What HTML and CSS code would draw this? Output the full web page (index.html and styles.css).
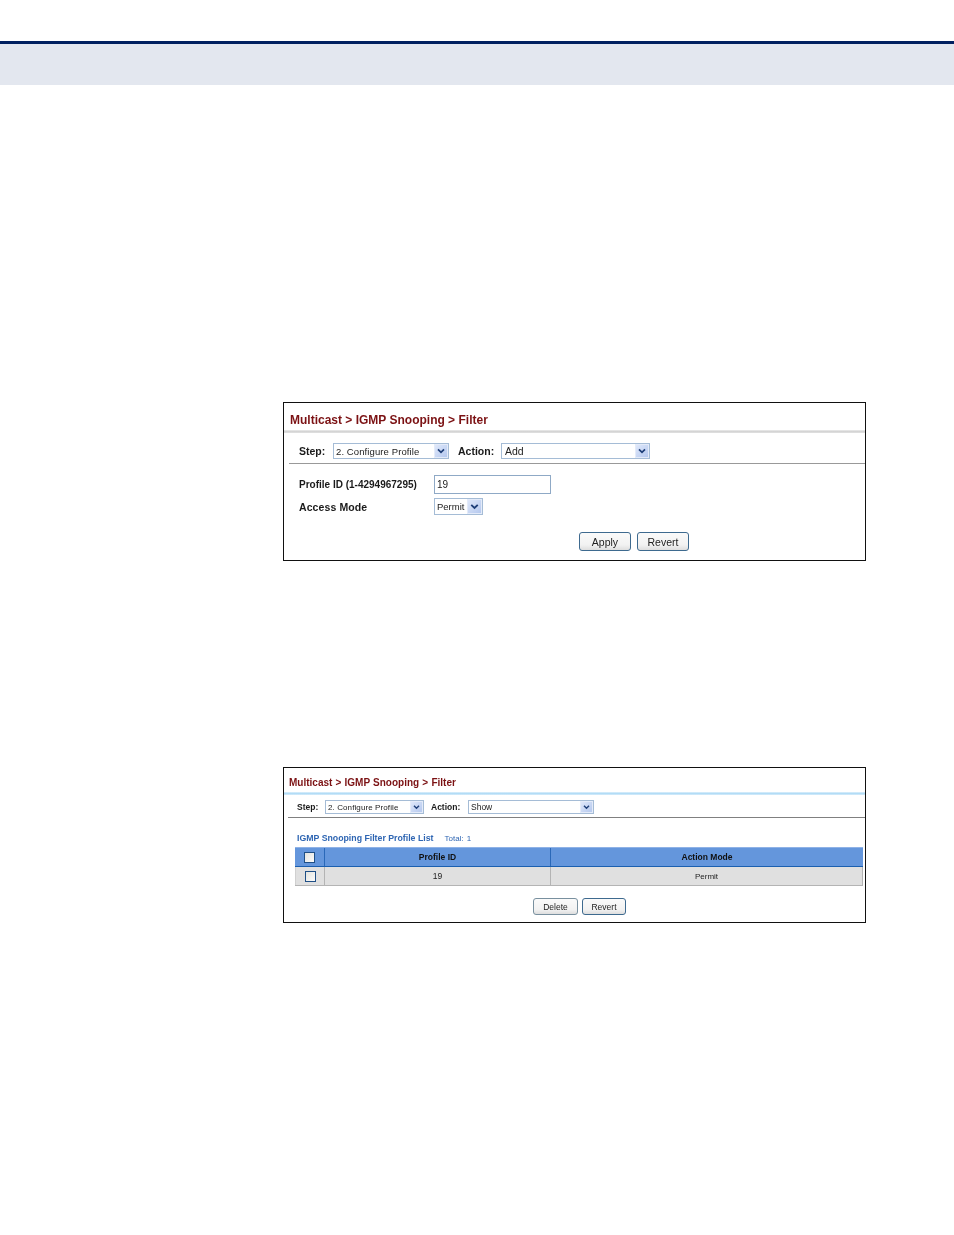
FILE: index.html
```html
<!DOCTYPE html>
<html lang="en">
<head>
<meta charset="utf-8">
<title>IGMP Snooping Filter</title>
<link rel="stylesheet" href="styles.css">
</head>
<body>
<header class="page-head"></header>

<section class="panel panel-a">
  <h1 class="crumb">Multicast &gt; IGMP Snooping &gt; Filter</h1>
  <div class="band"></div>
  <div class="step-row">
    <span class="lbl lbl-step">Step:</span>
    <div class="sel sel-step"><span class="sel-text">2. Configure Profile</span><span class="arrow"><svg viewBox="0 0 14 14"><path d="M3.5 5.2 7 8.6l3.5-3.4" fill="none" stroke="#1f3f78" stroke-width="2"/></svg></span></div>
    <span class="lbl lbl-action">Action:</span>
    <div class="sel sel-action"><span class="sel-text">Add</span><span class="arrow"><svg viewBox="0 0 14 14"><path d="M3.5 5.2 7 8.6l3.5-3.4" fill="none" stroke="#1f3f78" stroke-width="2"/></svg></span></div>
  </div>
  <div class="rule"></div>
  <div class="form">
    <div class="form-row row-id">
      <span class="lbl form-lbl lbl-id">Profile ID (1-4294967295)</span>
      <div class="input">19</div>
    </div>
    <div class="form-row row-mode">
      <span class="lbl form-lbl lbl-mode">Access Mode</span>
      <div class="sel sel-mode"><span class="sel-text">Permit</span><span class="arrow"><svg viewBox="0 0 14 14"><path d="M3.5 5.2 7 8.6l3.5-3.4" fill="none" stroke="#1f3f78" stroke-width="2"/></svg></span></div>
    </div>
  </div>
  <div class="actions">
    <span class="btn btn-apply">Apply</span>
    <span class="btn btn-revert">Revert</span>
  </div>
</section>

<section class="panel panel-b">
  <h1 class="crumb">Multicast &gt; IGMP Snooping &gt; Filter</h1>
  <div class="band"></div>
  <div class="step-row">
    <span class="lbl lbl-step">Step:</span>
    <div class="sel sel-step"><span class="sel-text">2. Configure Profile</span><span class="arrow"><svg viewBox="0 0 14 14"><path d="M3.5 5.2 7 8.6l3.5-3.4" fill="none" stroke="#1f3f78" stroke-width="2"/></svg></span></div>
    <span class="lbl lbl-action">Action:</span>
    <div class="sel sel-action"><span class="sel-text">Show</span><span class="arrow"><svg viewBox="0 0 14 14"><path d="M3.5 5.2 7 8.6l3.5-3.4" fill="none" stroke="#1f3f78" stroke-width="2"/></svg></span></div>
  </div>
  <div class="rule"></div>
  <div class="list-title"><span class="list-name">IGMP Snooping Filter Profile List</span><span class="list-total">Total: 1</span></div>
  <div class="table">
    <div class="tr th">
      <div class="cell c-check"><span class="check"></span></div>
      <div class="cell c-id">Profile ID</div>
      <div class="cell c-mode">Action Mode</div>
    </div>
    <div class="tr td">
      <div class="cell c-check"><span class="check"></span></div>
      <div class="cell c-id">19</div>
      <div class="cell c-mode">Permit</div>
    </div>
  </div>
  <div class="actions">
    <span class="btn btn-delete">Delete</span>
    <span class="btn btn-revert">Revert</span>
  </div>
</section>
</body>
</html>
```

FILE: styles.css
```css
* { box-sizing: border-box; }
html, body { margin: 0; padding: 0; background: #fff; }
body { height: 1235px; overflow: hidden; font-family: "Liberation Sans", Arial, sans-serif; color: #222; }

.page-head {
  margin-top: 41px;
  height: 44px;
  background: #e3e7ef;
  border-top: 3px solid #002060;
}

.panel {
  background: #fff;
  border: 1px solid #111;
  display: flex;
  flex-direction: column;
  width: 583px;
  filter: blur(0.4px);
}
.panel-a { height: 159px; margin: 317px 0 0 283px; }
.panel-b { height: 156px; margin: 206px 0 0 283px; }

.crumb { margin: 0; font-weight: bold; color: #7b1113; white-space: nowrap; }
.panel-a .crumb { font-size: 12px; line-height: 14px; padding: 10px 0 0 6px; }
.panel-b .crumb { font-size: 10px; line-height: 12px; padding: 9px 0 0 5px; word-spacing: 0.4px; }

.band { height: 3px; margin-top: 3px; }
.panel-a .band { background: linear-gradient(#ececec, #d0d0d0 60%, #e6e6e6); }
.panel-b .band { background: linear-gradient(#dff0fb, #a9d8f5 60%, #e4f3fc); }

.step-row { display: flex; align-items: center; }
.panel-a .step-row { height: 16px; margin-top: 10px; font-size: 10.5px; }
.panel-b .step-row { height: 14px; margin-top: 5px; font-size: 8.5px; }

.lbl { font-weight: bold; color: #1a1a1a; white-space: nowrap; }
.panel-a .lbl-step { margin-left: 15px; width: 34px; }
.panel-a .lbl-action { margin-left: 9px; width: 43px; }
.panel-b .lbl-step { margin-left: 13px; width: 28px; }
.panel-b .lbl-action { margin-left: 7px; width: 37px; }

.sel {
  display: flex;
  align-items: center;
  justify-content: space-between;
  border: 1px solid #a5bcd6;
  background: #fff;
  color: #222;
  white-space: nowrap;
}
.sel-text { padding-left: 2px; }
.arrow {
  display: block;
  align-self: stretch;
  background: linear-gradient(135deg, #dfe8fa, #b5c8ee);
  border: 1px solid #e4ebf9;
}
.arrow svg { display: block; width: 100%; height: 100%; }

.panel-a .sel { height: 16px; }
.panel-a .sel-step { width: 116px; font-size: 9.5px; letter-spacing: 0.1px; }
.panel-a .sel-action { width: 149px; }
.panel-a .sel-action .sel-text { padding-left: 3px; }
.panel-a .arrow { width: 14px; }
.panel-b .sel { height: 14px; }
.panel-b .sel-step { width: 99px; font-size: 8px; letter-spacing: 0.1px; }
.panel-b .sel-action { width: 126px; }
.panel-b .arrow { width: 13px; }

.rule { background: #999; height: 1px; }
.panel-a .rule { margin: 4px 0 0 5px; }
.panel-b .rule { margin: 3px 0 0 4px; background: #808080; }

.form { padding: 11px 0 0 15px; display: flex; flex-direction: column; gap: 4px; font-size: 10.5px; }
.form-row { display: flex; align-items: center; }
.form-lbl { width: 135px; }
.lbl-id { font-size: 10px; }
.lbl-mode { letter-spacing: 0.1px; }
.input {
  width: 117px;
  height: 19px;
  border: 1px solid #8fa9c6;
  padding-left: 2px;
  font-size: 10px;
  line-height: 17px;
  color: #222;
}
.panel-a .sel-mode { width: 49px; height: 17px; font-size: 9.5px; }
.sel-mode .arrow { width: 15px; }

.actions { display: flex; }
.panel-a .actions { margin: 17px 0 0 295px; gap: 6px; font-size: 10.5px; }
.panel-b .actions { margin: 12px 0 0 249px; gap: 4px; font-size: 8.5px; }

.btn {
  display: flex;
  align-items: center;
  justify-content: center;
  background: linear-gradient(#fafafa, #f2f2f2 70%, #dedede);
  border: 1px solid #3e6a8f;
  border-radius: 3px;
  color: #222;
}
.panel-a .btn { width: 52px; height: 19px; }
.panel-b .btn { height: 17px; }
.panel-b .btn-delete { width: 45px; border-color: #79909f; }
.panel-b .btn-revert { width: 44px; }

.list-title { display: flex; align-items: center; margin: 14px 0 0 13px; height: 12px; white-space: nowrap; }
.list-name { font-size: 8.75px; font-weight: bold; color: #2f66b3; }
.list-total { font-size: 8px; color: #2f66b3; margin-left: 11px; word-spacing: 1px; }

.table { margin: 3px 0 0 11px; width: 568px; font-size: 8.5px; }
.tr { display: flex; }
.th { height: 20px; background: #6496dc; font-weight: bold; color: #111; border-bottom: 1px solid #1a5fb0; border-top: 1px solid #8fb2e6; }
.td { height: 19px; background: #e0e0e0; color: #222; border-bottom: 1px solid #b4b4b4; }
.cell { display: flex; align-items: center; justify-content: center; }
.c-check { width: 29px; }
.c-id { width: 226px; }
.c-mode { flex: 1; }
.th .cell + .cell { border-left: 1px solid #2a68b8; }
.td .cell + .cell { border-left: 1px solid #b4b4b4; }
.td .c-check { border-left: 1px solid #d0d0d0; }
.td .c-mode { border-right: 1px solid #b4b4b4; font-size: 8px; }
.check {
  width: 11px;
  height: 11px;
  border: 1.5px solid #1f4f86;
  background: linear-gradient(135deg, #e4e4de, #fbfbfb);
}
```
